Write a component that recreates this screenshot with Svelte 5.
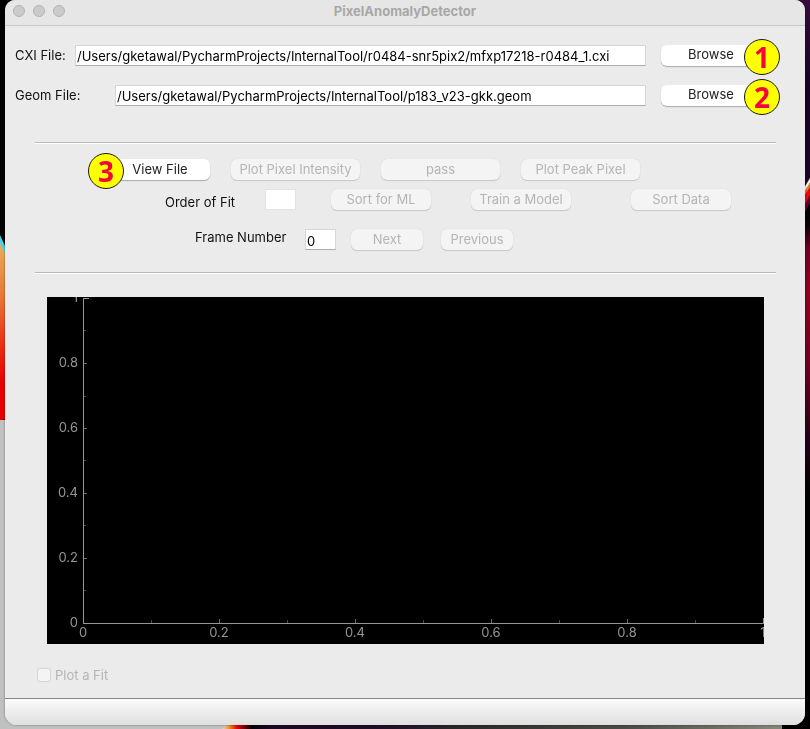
<script>
  let cxiFile = $state('/Users/gketawal/PycharmProjects/InternalTool/r0484-snr5pix2/mfxp17218-r0484_1.cxi');
  let geomFile = $state('/Users/gketawal/PycharmProjects/InternalTool/p183_v23-gkk.geom');
  let order = $state('');
  let frame = $state('0');

  const major = [0, 0.2, 0.4, 0.6, 0.8, 1];
  const minor = [0.1, 0.3, 0.5, 0.7, 0.9];
  const px = (v) => 36 + Math.round(v * 680);
  const py = (v) => 326 - Math.round(v * 325);
</script>

<svg class="wallpaper" viewBox="0 0 810 729" preserveAspectRatio="none" aria-hidden="true">
  <defs>
    <linearGradient id="flame" x1="0" y1="0" x2="0" y2="1">
      <stop offset="0" stop-color="#e9ad5c" />
      <stop offset="0.3" stop-color="#e87838" />
      <stop offset="0.6" stop-color="#ea2a10" />
      <stop offset="0.8" stop-color="#e60000" />
      <stop offset="1" stop-color="#e60000" />
    </linearGradient>
    <linearGradient id="night" x1="0" y1="0" x2="0" y2="1">
      <stop offset="0" stop-color="#380a3c" />
      <stop offset="0.12" stop-color="#160427" />
      <stop offset="0.25" stop-color="#1c0424" />
      <stop offset="0.29" stop-color="#000" />
      <stop offset="0.31" stop-color="#10000a" />
      <stop offset="0.34" stop-color="#6c0020" />
      <stop offset="0.4" stop-color="#900020" />
      <stop offset="0.5" stop-color="#6c0020" />
      <stop offset="0.6" stop-color="#240018" />
      <stop offset="0.68" stop-color="#000" />
      <stop offset="1" stop-color="#000" />
    </linearGradient>
    <linearGradient id="ground" x1="0" y1="0" x2="1" y2="0">
      <stop offset="0" stop-color="#000" />
      <stop offset="0.05" stop-color="#1c0826" />
      <stop offset="0.25" stop-color="#1e0e26" />
      <stop offset="0.4" stop-color="#292929" />
      <stop offset="0.7" stop-color="#4a4a46" />
      <stop offset="1" stop-color="#86867c" />
    </linearGradient>
    <linearGradient id="ember" x1="0" y1="0" x2="1" y2="0">
      <stop offset="0" stop-color="#e8e0d0" />
      <stop offset="0.25" stop-color="#f08a20" />
      <stop offset="0.5" stop-color="#e60010" />
      <stop offset="1" stop-color="#000" />
    </linearGradient>
  </defs>
  <rect width="810" height="729" fill="#bfc0c0" />
  <rect width="20" height="420" fill="#000" />
  <path d="M0 235 L5 246 L5 256 L0 246Z" fill="#43d3ef" />
  <path d="M0 243 L20 284 V418 L0 420Z" fill="url(#flame)" />
  <rect x="782" width="28" height="729" fill="url(#night)" />
  <path d="M804 188 L810 178 V183 L804 193Z" fill="#f4ead8" />
  <path d="M804 193 L810 183 V188 L804 197Z" fill="#ef7a18" />
  <path d="M804 196 L810 187 V196 L804 207Z" fill="#e80810" />
  <path d="M804 206 L810 195 V203 L804 214Z" fill="#5a0730" />
  <rect x="245" y="715" width="537" height="14" fill="url(#ground)" />
  <path d="M222 729 L232 722 H252 V729Z" fill="url(#ember)" />
</svg>

<div class="window">
  <header>
    <div class="lights">
      <button type="button" aria-label="Close"></button>
      <button type="button" aria-label="Minimize"></button>
      <button type="button" aria-label="Zoom"></button>
    </div>
    <h1>PixelAnomalyDetector</h1>
  </header>

  <main>
    <section class="files">
      <div class="file">
        <label class="short" for="cxi">CXI File:</label>
        <input id="cxi" type="text" spellcheck="false" bind:value={cxiFile} />
        <div class="marked">
          <button class="push" type="button">Browse</button>
          <span class="badge right">1</span>
        </div>
      </div>
      <div class="file">
        <label class="long" for="geom">Geom File:</label>
        <input id="geom" type="text" spellcheck="false" bind:value={geomFile} />
        <div class="marked">
          <button class="push" type="button">Browse</button>
          <span class="badge right">2</span>
        </div>
      </div>
    </section>

    <hr />

    <section class="tools">
      <div class="row first">
        <div class="marked">
          <button class="push" type="button">View File</button>
          <span class="badge left">3</span>
        </div>
        <button class="push wide" type="button" disabled>Plot Pixel Intensity</button>
        <button class="push mid" type="button" disabled>pass</button>
        <button class="push mid" type="button" disabled>Plot Peak Pixel</button>
      </div>
      <div class="row second">
        <label class="long" for="order">Order of Fit</label>
        <input id="order" class="plain" type="text" bind:value={order} />
        <button class="push" type="button" disabled>Sort for ML</button>
        <button class="push" type="button" disabled>Train a Model</button>
        <button class="push last" type="button" disabled>Sort Data</button>
      </div>
      <div class="row third">
        <label for="frame">Frame Number</label>
        <input id="frame" type="text" bind:value={frame} />
        <button class="push small" type="button" disabled>Next</button>
        <button class="push small" type="button" disabled>Previous</button>
      </div>
    </section>

    <hr />

    <svg class="plot" viewBox="0 0 717 347" role="img" aria-label="Plot">
      <rect width="717" height="347" fill="#000" />
      <g shape-rendering="crispEdges" fill="#969696">
        <rect x="36" y="1" width="1" height="326" />
        <rect x="36" y="326" width="681" height="1" />
        <rect x="36" y="1" width="6" height="1" />
        <rect x="716" y="321" width="1" height="6" />
        {#each major.slice(1, 5) as v}
          <rect x="37" y={py(v)} width="3" height="1" fill="#6e6e6e" />
          <rect x={px(v)} y="322" width="1" height="4" fill="#6e6e6e" />
        {/each}
        {#each minor as v}
          <rect x="37" y={py(v)} width="2" height="1" fill="#4a4a4a" />
          <rect x={px(v)} y="323" width="1" height="3" fill="#4a4a4a" />
        {/each}
      </g>
      <g class="ticks">
        {#each major as v}
          <text x="31" y={py(v) + 4} text-anchor="end">{v}</text>
          <text x={px(v)} y="340" text-anchor="middle">{v}</text>
        {/each}
      </g>
    </svg>

    <label class="check"><input type="checkbox" disabled /> Plot a Fit</label>
  </main>

  <footer></footer>
</div>

<style>
  :global(body) {
    background: #000;
  }
  .wallpaper {
    position: fixed;
    inset: 0;
    width: 100%;
    height: 100%;
  }
  .window {
    position: relative;
    display: flex;
    flex-direction: column;
    box-sizing: border-box;
    min-height: calc(100vh - 4px);
    margin: 0 5px 4px;
    border-radius: 10px 10px 12px 12px;
    overflow: hidden;
    background: #ebebeb;
    color: #111;
    font: 13px/16px Inter, 'Liberation Sans', sans-serif;
    box-shadow: 0 0 2px rgba(0, 0, 0, 0.5);
  }
  header {
    position: relative;
    display: flex;
    align-items: center;
    justify-content: center;
    height: 25px;
    border-bottom: 1px solid #c8c8c8;
    background: #e6e6e6;
  }
  h1 {
    margin: 0 0 4px;
    color: #a8a8a8;
    font-size: 13px;
    font-weight: 700;
  }
  .lights {
    position: absolute;
    left: 8px;
    top: 5px;
    display: flex;
    gap: 8px;
  }
  .lights button {
    box-sizing: border-box;
    width: 12px;
    height: 12px;
    padding: 0;
    border: 1px solid #b4b4b4;
    border-radius: 50%;
    background: #cbcbcb;
  }
  main {
    flex: 1;
    padding: 18px 30px 0 10px;
  }
  .files {
    display: flex;
    flex-direction: column;
    gap: 18px;
    padding-right: 14px;
  }
  .file {
    display: flex;
    align-items: center;
    height: 22px;
  }
  .short {
    width: 60px;
  }
  .long {
    width: 100px;
  }
  .file input {
    flex: 1;
    min-width: 0;
    margin-right: 15px;
  }
  input[type='text'] {
    box-sizing: border-box;
    height: 21px;
    padding: 2px 1px 0;
    border: 1px solid #d6d6d6;
    border-bottom-color: #adadad;
    border-radius: 0;
    outline: none;
    background: #fff;
    color: #000;
    font: inherit;
  }
  .push {
    box-sizing: border-box;
    display: block;
    width: 100px;
    height: 21px;
    padding: 0 0 2px;
    border: 0;
    border-radius: 6px;
    background: #fff;
    box-shadow: 0 1px 1px rgba(0, 0, 0, 0.28);
    color: #222;
    font: inherit;
    white-space: nowrap;
  }
  .push:disabled {
    background: #f4f4f4;
    box-shadow: 0 0 1px rgba(0, 0, 0, 0.14), 0 1px 1px rgba(0, 0, 0, 0.14);
    color: #b5b5b5;
  }
  .push.wide {
    width: 129px;
  }
  .push.mid {
    width: 119px;
  }
  .push.small {
    width: 72px;
  }
  .marked {
    position: relative;
  }
  .badge {
    position: absolute;
    top: -6px;
    box-sizing: border-box;
    width: 36px;
    height: 36px;
    border: 1px solid #1a1a1a;
    border-radius: 50%;
    background: #ff0;
    color: #f2063c;
    font: 700 28px/34px 'Open Sans', 'Noto Sans', sans-serif;
    text-align: center;
  }
  .right {
    right: -19px;
  }
  .left {
    left: -22px;
  }
  hr {
    height: 1px;
    margin: 0 -1px 0 20px;
    border: 0;
    border-top: 1px solid #b9b9b9;
    background: #fff;
  }
  .files + hr {
    margin-top: 36px;
  }
  .tools {
    padding: 15px 0 22px;
  }
  .row {
    display: flex;
    align-items: flex-end;
  }
  .first {
    gap: 21px;
    padding-left: 95px;
  }
  .second {
    gap: 40px;
    margin-top: 9px;
    padding-left: 150px;
  }
  .second .long {
    margin-right: -40px;
  }
  .second .plain {
    width: 31px;
    margin-right: -5px;
    border-color: #e2e2e2;
  }
  .second .last {
    margin-left: 20px;
  }
  .third {
    gap: 18px;
    margin-top: 19px;
    padding-left: 180px;
    align-items: flex-start;
  }
  .third label {
    width: 92px;
    white-space: nowrap;
  }
  .third input {
    width: 31px;
    margin-right: -3px;
  }
  .plot {
    display: block;
    width: calc(100% - 43px);
    height: auto;
    margin: 23px 0 0 32px;
  }
  .ticks text {
    fill: #969696;
    font: 13px Inter, 'Liberation Sans', sans-serif;
  }
  .check {
    display: inline-flex;
    align-items: center;
    gap: 4px;
    margin: 23px 0 15px 22px;
    color: #b5b5b5;
  }
  .check input {
    box-sizing: border-box;
    appearance: none;
    width: 14px;
    height: 14px;
    margin: 0;
    border: 1px solid #d4d4d4;
    border-radius: 3px;
    background: #f4f4f4;
  }
  footer {
    height: 26px;
    border-top: 1px solid #858585;
    background: linear-gradient(#fbfbfb, #dfdfdf);
  }
</style>
